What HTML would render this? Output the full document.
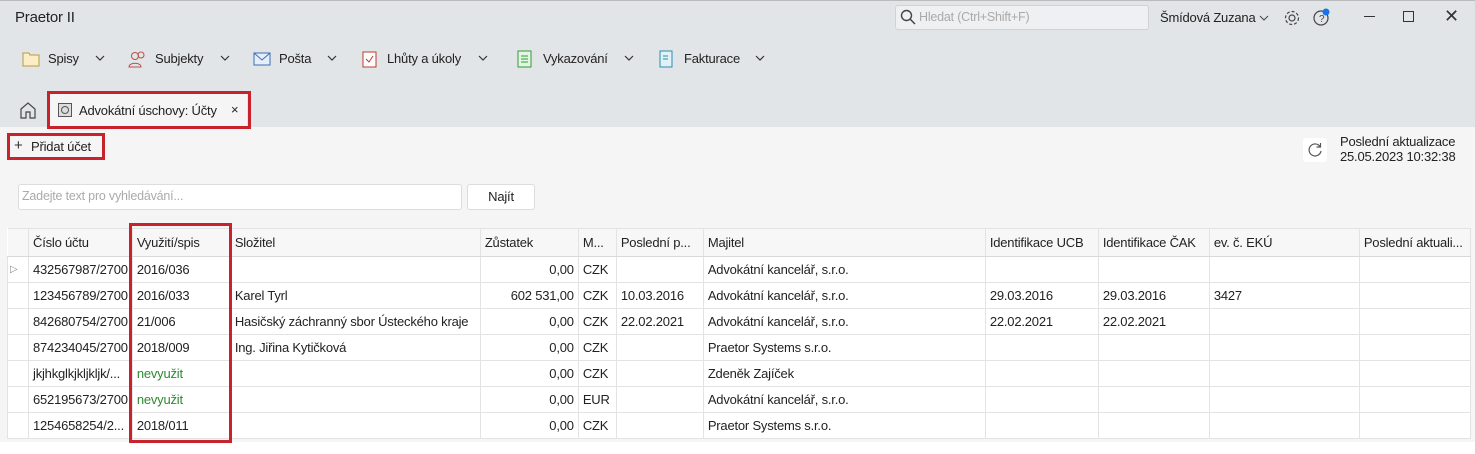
<!DOCTYPE html>
<html><head><meta charset="utf-8"><style>
*{box-sizing:border-box;margin:0;padding:0}
body{width:1475px;height:454px;overflow:hidden;background:#f5f5f5;font-family:"Liberation Sans",sans-serif;font-size:13px;color:#222;position:relative;letter-spacing:-0.2px}
.a{position:absolute;white-space:nowrap}
.top{position:absolute;left:0;top:0;width:1475px;height:127px;background:#e2e5e7;border-top:1px solid #bbb}
.red{position:absolute;border:3px solid #c8232c}
table{position:absolute;left:7px;top:228px;border-collapse:collapse;background:#fff;table-layout:fixed}
td,th{border:1px solid #e3e3e3;height:26px;padding:0 4px;font-weight:normal;text-align:left;overflow:hidden;white-space:nowrap}
th{height:28px;background:#f7f7f7;border-bottom:1px solid #d8d8d8}
.r{text-align:right}
.g{color:#2e8b2e}
.nav span{position:absolute;top:51px}
.chev{position:absolute;top:55px}
</style></head><body>
<div class="top"></div>
<div class="a" style="left:15px;top:9px;font-size:15px">Praetor II</div>
<div class="a" style="left:895px;top:5px;width:254px;height:25px;background:#eef0f1;border:1px solid #d0d3d5;border-radius:3px"></div>
<svg class="a" style="left:900px;top:9px" width="16" height="16"><circle cx="6.5" cy="6.5" r="5" fill="none" stroke="#444" stroke-width="1.4"/><path d="M10 10l5 5" stroke="#444" stroke-width="1.5"/></svg>
<div class="a" style="left:919px;top:10px;color:#aaa;font-size:12.5px">Hledat (Ctrl+Shift+F)</div>
<div class="a" style="left:1160px;top:10px">Šmídová Zuzana</div>
<svg class="a" style="left:1259px;top:15px" width="10" height="6"><path d="M1 1l4 4 4-4" fill="none" stroke="#444"/></svg>
<svg class="a" style="left:1283px;top:9px" width="18" height="18"><circle cx="9" cy="9" r="3" fill="none" stroke="#444" stroke-width="1.2"/><circle cx="9" cy="9" r="6.5" fill="none" stroke="#444" stroke-width="1.2" stroke-dasharray="3 2"/></svg>
<svg class="a" style="left:1312px;top:7px" width="20" height="20"><circle cx="9" cy="11" r="7" fill="none" stroke="#444" stroke-width="1.2"/><text x="7" y="15" font-size="10" fill="#444">?</text><circle cx="14" cy="5" r="3.5" fill="#1a73e8"/></svg>
<div class="a" style="left:1364px;top:16px;width:11px;height:1px;background:#333"></div>
<div class="a" style="left:1403px;top:11px;width:11px;height:11px;border:1.3px solid #333"></div>
<div class="a" style="left:1444px;top:6px;font-size:18px;color:#333">✕</div>
<div class="nav">
<svg class="a" style="left:22px;top:51px" width="18" height="16"><path d="M1 2h6l1 2h9v11H1z" fill="#fbeec6" stroke="#b89a3e"/></svg><span style="left:48px">Spisy</span>
<svg class="a" style="left:128px;top:50px" width="20" height="18"><circle cx="7" cy="6" r="3.5" fill="none" stroke="#b5524a"/><path d="M1 17c0-5 12-5 12 0z" fill="none" stroke="#b5524a"/><circle cx="13" cy="5" r="3" fill="none" stroke="#b5524a"/></svg><span style="left:155px">Subjekty</span>
<svg class="a" style="left:253px;top:52px" width="18" height="14"><rect x="1" y="1" width="16" height="12" fill="#e5eefa" stroke="#3b6db3"/><path d="M1 1l8 7 8-7" fill="none" stroke="#3b6db3"/></svg><span style="left:279px">Pošta</span>
<svg class="a" style="left:362px;top:49px" width="15" height="19"><rect x="1" y="3" width="13" height="15" fill="#fff" stroke="#c0392b"/><path d="M4 10l3 3 4-6" fill="none" stroke="#c0392b"/></svg><span style="left:387px">Lhůty a úkoly</span>
<svg class="a" style="left:517px;top:49px" width="15" height="19"><rect x="1" y="2" width="13" height="16" fill="#e4f5e4" stroke="#2e9a3a"/><path d="M4 7h7M4 10h7M4 13h7" stroke="#2e9a3a"/></svg><span style="left:543px">Vykazování</span>
<svg class="a" style="left:659px;top:50px" width="14" height="18"><rect x="1" y="1" width="12" height="16" fill="#e0f2f7" stroke="#2a8fae"/><path d="M4 6h5M4 9h5" stroke="#2a8fae"/></svg><span style="left:684px">Fakturace</span>
<svg class="chev a" style="left:95px" width="10" height="6"><path d="M1 1l4 4 4-4" fill="none" stroke="#333" stroke-width="1.2"/></svg>
<svg class="chev a" style="left:220px" width="10" height="6"><path d="M1 1l4 4 4-4" fill="none" stroke="#333" stroke-width="1.2"/></svg>
<svg class="chev a" style="left:327px" width="10" height="6"><path d="M1 1l4 4 4-4" fill="none" stroke="#333" stroke-width="1.2"/></svg>
<svg class="chev a" style="left:478px" width="10" height="6"><path d="M1 1l4 4 4-4" fill="none" stroke="#333" stroke-width="1.2"/></svg>
<svg class="chev a" style="left:624px" width="10" height="6"><path d="M1 1l4 4 4-4" fill="none" stroke="#333" stroke-width="1.2"/></svg>
<svg class="chev a" style="left:755px" width="10" height="6"><path d="M1 1l4 4 4-4" fill="none" stroke="#333" stroke-width="1.2"/></svg>
</div>
<svg class="a" style="left:19px;top:101px" width="18" height="18"><path d="M2 8l7-6 7 6v9h-5v-6H7v6H2z" fill="none" stroke="#444" stroke-width="1.2"/></svg>
<div class="a" style="left:50px;top:94px;width:197px;height:32px;background:#f5f5f5"></div>
<svg class="a" style="left:58px;top:103px" width="14" height="14"><rect x="0.5" y="0.5" width="13" height="13" fill="#ddd" stroke="#555"/><circle cx="7" cy="7" r="3.5" fill="none" stroke="#555"/></svg>
<div class="a" style="left:79px;top:103px">Advokátní úschovy: Účty</div>
<div class="a" style="left:231px;top:102px;font-size:13px">×</div>
<div class="red" style="left:47px;top:91px;width:204px;height:38px"></div>
<div class="a" style="left:14px;top:137px;font-size:15px;color:#333">+</div>
<div class="a" style="left:31px;top:139px">Přidat účet</div>
<div class="red" style="left:7px;top:133px;width:98px;height:27px"></div>
<div class="a" style="left:1303px;top:138px;width:24px;height:24px;background:#fff;border-radius:3px"></div>
<svg class="a" style="left:1307px;top:142px" width="16" height="16"><path d="M13 4.5A6 6 0 1 0 14 9" fill="none" stroke="#555" stroke-width="1.2"/><path d="M13.5 1v4h-4" fill="none" stroke="#555" stroke-width="1.2"/></svg>
<div class="a" style="left:1340px;top:134px;line-height:15px">Poslední aktualizace<br>25.05.2023 10:32:38</div>
<div class="a" style="left:18px;top:184px;width:444px;height:26px;background:#fff;border:1px solid #ddd;border-radius:3px"></div>
<div class="a" style="left:22px;top:189px;color:#aaa;font-size:12.5px">Zadejte text pro vyhledávání...</div>
<div class="a" style="left:467px;top:184px;width:68px;height:26px;background:#fff;border:1px solid #ddd;border-radius:3px;text-align:center;line-height:24px">Najít</div>
<table>
<colgroup><col style="width:21px"><col style="width:102px"><col style="width:98px"><col style="width:250px"><col style="width:98px"><col style="width:38px"><col style="width:87px"><col style="width:282px"><col style="width:113px"><col style="width:111px"><col style="width:150px"><col style="width:111px"></colgroup>
<tr><th style="border-left:none"></th><th>Číslo účtu</th><th>Využití/spis</th><th>Složitel</th><th>Zůstatek</th><th>M...</th><th>Poslední p...</th><th>Majitel</th><th>Identifikace UCB</th><th>Identifikace ČAK</th><th>ev. č. EKÚ</th><th>Poslední aktuali...</th></tr>
<tr><td style="color:#888;font-size:10px;padding:0 2px">▷</td><td>432567987/2700</td><td>2016/036</td><td></td><td class="r">0,00</td><td>CZK</td><td></td><td>Advokátní kancelář, s.r.o.</td><td></td><td></td><td></td><td></td></tr>
<tr><td></td><td>123456789/2700</td><td>2016/033</td><td>Karel Tyrl</td><td class="r">602 531,00</td><td>CZK</td><td>10.03.2016</td><td>Advokátní kancelář, s.r.o.</td><td>29.03.2016</td><td>29.03.2016</td><td>3427</td><td></td></tr>
<tr><td></td><td>842680754/2700</td><td>21/006</td><td>Hasičský záchranný sbor Ústeckého kraje</td><td class="r">0,00</td><td>CZK</td><td>22.02.2021</td><td>Advokátní kancelář, s.r.o.</td><td>22.02.2021</td><td>22.02.2021</td><td></td><td></td></tr>
<tr><td></td><td>874234045/2700</td><td>2018/009</td><td>Ing. Jiřina Kytičková</td><td class="r">0,00</td><td>CZK</td><td></td><td>Praetor Systems s.r.o.</td><td></td><td></td><td></td><td></td></tr>
<tr><td></td><td>jkjhkglkjkljkljk/...</td><td class="g">nevyužit</td><td></td><td class="r">0,00</td><td>CZK</td><td></td><td>Zdeněk Zajíček</td><td></td><td></td><td></td><td></td></tr>
<tr><td></td><td>652195673/2700</td><td class="g">nevyužit</td><td></td><td class="r">0,00</td><td>EUR</td><td></td><td>Advokátní kancelář, s.r.o.</td><td></td><td></td><td></td><td></td></tr>
<tr><td></td><td>1254658254/2...</td><td>2018/011</td><td></td><td class="r">0,00</td><td>CZK</td><td></td><td>Praetor Systems s.r.o.</td><td></td><td></td><td></td><td></td></tr>
</table>
<div class="a" style="left:0;top:442px;width:1475px;height:12px;background:#fff"></div>
<div class="red" style="left:129px;top:223px;width:103px;height:220px"></div>
</body></html>
